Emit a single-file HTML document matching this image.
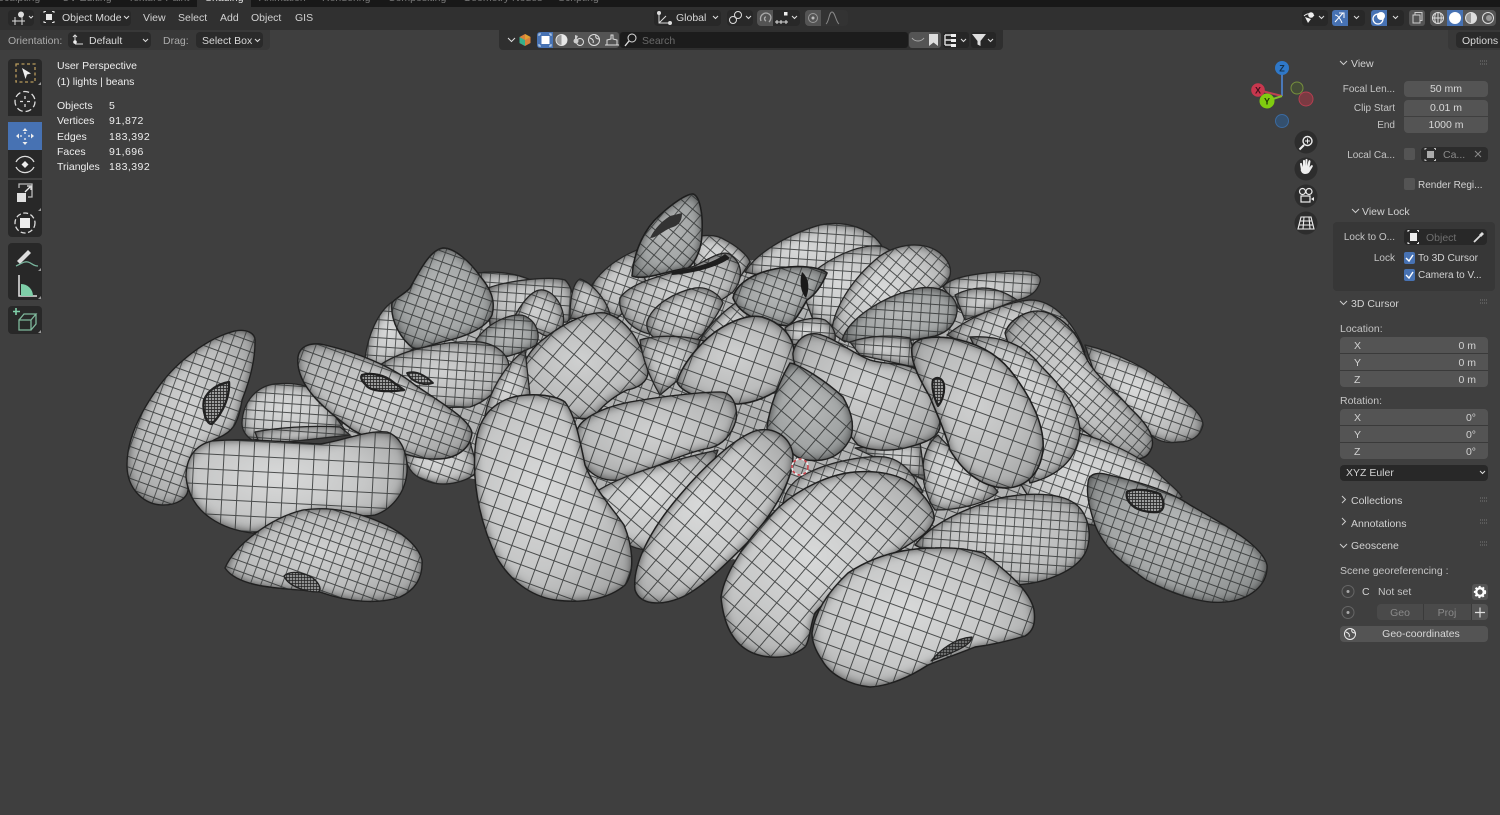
<!DOCTYPE html>
<html><head><meta charset="utf-8"><style>
html,body{margin:0;padding:0;background:#3f3f3f;width:1500px;height:815px;overflow:hidden}
body{position:relative;font-family:"Liberation Sans",sans-serif;font-size:10.5px;color:#d2d2d2}
.t{position:absolute;white-space:nowrap;line-height:14px;margin-top:1px}
.r{text-align:right}
.c{text-align:center}
.n{letter-spacing:.45px}
.box{position:absolute}
.d{color:#8a8a8a}
.f{position:absolute;background:#545454;color:#d8d8d8;line-height:16px;height:16px;box-sizing:border-box}
svg{position:absolute;left:0;top:0;overflow:visible}
path[stroke="#151515"],path[stroke="#1e1e1e"],path[stroke="#111"]{filter:url(#i)}
</style></head><body>

<svg width="1500" height="815" viewBox="0 0 1500 815" fill="none">
<defs>
<filter id="i" x="-25%" y="-25%" width="150%" height="150%" color-interpolation-filters="sRGB">
<feFlood flood-color="#2c2c2c" result="f"/>
<feComposite in="f" in2="SourceAlpha" operator="out" result="o"/>
<feGaussianBlur in="o" stdDeviation="5" result="b"/>
<feComposite in="b" in2="SourceAlpha" operator="in" result="s"/>
<feMerge><feMergeNode in="SourceGraphic"/><feMergeNode in="s"/></feMerge>
</filter>
<radialGradient id="g" cx=".48" cy=".45" r=".65"><stop offset="0" stop-color="#cfd0d0"/><stop offset=".6" stop-color="#bcbdbd"/><stop offset="1" stop-color="#a2a3a3"/></radialGradient>
<radialGradient id="h" cx=".5" cy=".45" r=".65"><stop offset="0" stop-color="#b6b8b8"/><stop offset=".6" stop-color="#a2a5a5"/><stop offset="1" stop-color="#858888"/></radialGradient>
<radialGradient id="k" cx=".42" cy=".45" r=".65"><stop offset="0" stop-color="#d8d9d9"/><stop offset=".6" stop-color="#c6c7c7"/><stop offset="1" stop-color="#a8a9a9"/></radialGradient>
<pattern id="a0" width="9" height="9" patternUnits="userSpaceOnUse" patternTransform="rotate(4)"><path d="M0 4.500H9M4.500 0V9" stroke="#2b2d2d" stroke-opacity=".8" stroke-width=".9"/></pattern>
<pattern id="a20" width="10" height="10" patternUnits="userSpaceOnUse" patternTransform="rotate(20)"><path d="M0 5H10M5 0V10" stroke="#2b2d2d" stroke-opacity=".8" stroke-width=".9"/></pattern>
<pattern id="a40" width="10" height="10" patternUnits="userSpaceOnUse" patternTransform="rotate(40)"><path d="M0 5H10M5 0V10" stroke="#2b2d2d" stroke-opacity=".8" stroke-width=".9"/></pattern>
<pattern id="a65" width="10" height="10" patternUnits="userSpaceOnUse" patternTransform="rotate(65)"><path d="M0 5H10M5 0V10" stroke="#2b2d2d" stroke-opacity=".8" stroke-width=".9"/></pattern>
<pattern id="c0" width="15" height="15" patternUnits="userSpaceOnUse" patternTransform="rotate(3)"><path d="M0 7.500H15M7.500 0V15" stroke="#2b2d2d" stroke-opacity=".8" stroke-width="1"/></pattern>
<pattern id="c20" width="15" height="15" patternUnits="userSpaceOnUse" patternTransform="rotate(20)"><path d="M0 7.500H15M7.500 0V15" stroke="#2b2d2d" stroke-opacity=".8" stroke-width="1"/></pattern>
<pattern id="c40" width="15" height="15" patternUnits="userSpaceOnUse" patternTransform="rotate(40)"><path d="M0 7.500H15M7.500 0V15" stroke="#2b2d2d" stroke-opacity=".8" stroke-width="1"/></pattern>
<pattern id="c65" width="15" height="15" patternUnits="userSpaceOnUse" patternTransform="rotate(65)"><path d="M0 7.500H15M7.500 0V15" stroke="#2b2d2d" stroke-opacity=".8" stroke-width="1"/></pattern>
<pattern id="m" width="3" height="3" patternUnits="userSpaceOnUse"><path d="M0 1.500H3M1.500 0V3" stroke="#222" stroke-width=".7"/></pattern>
</defs>

<g stroke-linejoin="round">
<!-- base blob filling pile gaps -->
<path fill="#b2b3b3" d="M385,345L480,295L590,295L640,265L880,255L950,290L1030,305L1085,355L1150,445L1085,490L1000,545L920,550L800,560L720,560L650,545L600,500L480,480L420,470L340,430Z"/><path fill="url(#a20)" d="M385,345L480,295L590,295L640,265L880,255L950,290L1030,305L1085,355L1150,445L1085,490L1000,545L920,550L800,560L720,560L650,545L600,500L480,480L420,470L340,430Z"/>
<!-- back row -->
<path fill="url(#k)" stroke="#1e1e1e" stroke-width="1.2" d="M365,358C368,335 378,312 392,302L420,345L385,366C375,368 366,365 365,358Z"/><path fill="url(#a0)" d="M365,358C368,335 378,312 392,302L420,345L385,366C375,368 366,365 365,358Z"/>
<path fill="url(#g)" stroke="#1e1e1e" stroke-width="1.2" d="M478,273C500,270 525,275 540,285L480,300Z"/><path fill="url(#a0)" d="M478,273C500,270 525,275 540,285L480,300Z"/>
<path fill="url(#g)" stroke="#1e1e1e" stroke-width="1.2" d="M488,288C510,280 550,276 565,280C576,290 575,315 567,322L490,325Z"/><path fill="url(#a0)" d="M488,288C510,280 550,276 565,280C576,290 575,315 567,322L490,325Z"/>
<path fill="url(#g)" stroke="#1e1e1e" stroke-width="1.2" d="M592,285C605,265 625,255 637,250L648,290L615,320C605,310 595,295 592,285Z"/><path fill="url(#a20)" d="M592,285C605,265 625,255 637,250L648,290L615,320C605,310 595,295 592,285Z"/>
<path fill="url(#g)" stroke="#1e1e1e" stroke-width="1.2" d="M570,318C570,295 574,282 580,279C590,282 606,298 610,314C596,316 580,320 570,318Z"/><path fill="url(#a20)" d="M570,318C570,295 574,282 580,279C590,282 606,298 610,314C596,316 580,320 570,318Z"/>
<path fill="url(#g)" stroke="#1e1e1e" stroke-width="1.2" d="M509,330C515,312 530,288 543,290C556,292 566,310 563,325C558,335 550,340 540,333C530,328 515,330 509,330Z"/><path fill="url(#a20)" d="M509,330C515,312 530,288 543,290C556,292 566,310 563,325C558,335 550,340 540,333C530,328 515,330 509,330Z"/>
<path fill="url(#k)" stroke="#1e1e1e" stroke-width="1.2" d="M692,240C697,235 715,233 725,240C735,245 748,255 750,262L735,285L695,270Z"/><path fill="url(#a40)" d="M692,240C697,235 715,233 725,240C735,245 748,255 750,262L735,285L695,270Z"/>
<path fill="url(#h)" stroke="#111" stroke-width="1.5" d="M632,276C634,250 645,228 660,215C672,204 686,194 693,194C700,196 703,215 702,232C702,248 696,262 688,268C670,270 645,281 632,276Z"/><path fill="url(#a40)" d="M632,276C634,250 645,228 660,215C672,204 686,194 693,194C700,196 703,215 702,232C702,248 696,262 688,268C670,270 645,281 632,276Z"/>
<path fill="#333" d="M650,238C656,226 664,220 670,216L682,213C682,222 678,226 670,228C662,232 656,238 650,238Z"/>
<path fill="url(#k)" stroke="#1e1e1e" stroke-width="1.2" d="M745,272C755,255 785,235 820,225C845,220 872,228 883,248C875,262 820,272 790,282Z"/><path fill="url(#a0)" d="M745,272C755,255 785,235 820,225C845,220 872,228 883,248C875,262 820,272 790,282Z"/>
<path fill="url(#k)" stroke="#1e1e1e" stroke-width="1.2" d="M800,285C820,262 855,244 880,246C900,250 900,270 880,295C860,320 835,330 815,325Z"/><path fill="url(#a0)" d="M800,285C820,262 855,244 880,246C900,250 900,270 880,295C860,320 835,330 815,325Z"/>
<path fill="url(#g)" stroke="#1e1e1e" stroke-width="1.2" d="M620,298C630,282 665,275 695,266C710,258 725,248 732,256C742,264 744,278 733,292C715,305 690,320 660,335C640,336 617,320 620,298Z"/><path fill="url(#a20)" d="M620,298C630,282 665,275 695,266C710,258 725,248 732,256C742,264 744,278 733,292C715,305 690,320 660,335C640,336 617,320 620,298Z"/>
<path fill="#1e1e1e" d="M672,272C695,268 715,262 725,254L730,258C718,267 695,273 672,275Z"/>
<path fill="url(#g)" stroke="#1e1e1e" stroke-width="1.2" d="M647,322C652,305 675,292 695,288C708,286 720,295 723,303C715,320 705,332 697,340L655,338C650,335 646,330 647,322Z"/><path fill="url(#a20)" d="M647,322C652,305 675,292 695,288C708,286 720,295 723,303C715,320 705,332 697,340L655,338C650,335 646,330 647,322Z"/>
<path fill="url(#g)" stroke="#1e1e1e" stroke-width="1.2" d="M700,340C708,325 725,310 740,300L760,330L720,345Z"/><path fill="url(#a40)" d="M700,340C708,325 725,310 740,300L760,330L720,345Z"/>
<path fill="url(#h)" stroke="#111" stroke-width="1.6" d="M733,298C736,283 755,272 780,268C800,265 820,267 827,273C822,285 815,295 807,300C800,312 795,322 787,326C770,323 742,320 733,298Z"/><path fill="url(#a20)" d="M733,298C736,283 755,272 780,268C800,265 820,267 827,273C822,285 815,295 807,300C800,312 795,322 787,326C770,323 742,320 733,298Z"/>
<path fill="#1a1a1a" d="M802,272C809,278 810,288 806,298C801,293 799,282 802,272Z"/>
<path fill="url(#g)" stroke="#1e1e1e" stroke-width="1.2" d="M943,287C950,276 985,272 1015,271C1035,270 1042,276 1040,282C1037,292 1030,297 1018,300L960,310Z"/><path fill="url(#a0)" d="M943,287C950,276 985,272 1015,271C1035,270 1042,276 1040,282C1037,292 1030,297 1018,300L960,310Z"/>
<path fill="url(#g)" stroke="#1e1e1e" stroke-width="1.2" d="M955,295C975,285 995,285 1017,300L965,320Z"/><path fill="url(#a0)" d="M955,295C975,285 995,285 1017,300L965,320Z"/>
<path fill="url(#k)" stroke="#1e1e1e" stroke-width="1.2" d="M832,333C832,312 850,280 880,256C900,242 930,240 945,258C955,270 950,282 940,288C912,300 870,320 845,342Z"/><path fill="url(#a40)" d="M832,333C832,312 850,280 880,256C900,242 930,240 945,258C955,270 950,282 940,288C912,300 870,320 845,342Z"/>
<path fill="url(#h)" stroke="#1e1e1e" stroke-width="1.3" d="M842,340C848,318 885,295 920,288C945,285 958,298 957,312C955,325 948,332 935,336C900,342 870,350 842,340Z"/><path fill="url(#a0)" d="M842,340C848,318 885,295 920,288C945,285 958,298 957,312C955,325 948,332 935,336C900,342 870,350 842,340Z"/>
<path fill="url(#g)" stroke="#1e1e1e" stroke-width="1.2" d="M947,335C965,320 1000,303 1030,300C1055,300 1075,325 1085,352L1000,360Z"/><path fill="url(#a20)" d="M947,335C965,320 1000,303 1030,300C1055,300 1075,325 1085,352L1000,360Z"/>
<path fill="url(#k)" stroke="#1e1e1e" stroke-width="1.2" d="M785,328C795,320 815,316 825,320C832,325 836,332 835,340L790,345Z"/><path fill="url(#a0)" d="M785,328C795,320 815,316 825,320C832,325 836,332 835,340L790,345Z"/>

<!-- pointed big bean -->
<path fill="url(#h)" stroke="#151515" stroke-width="1.4" d="M392,303C395,298 405,294 410,288C420,270 430,250 443,248C455,248 470,262 480,276C490,288 496,300 492,315C485,330 460,338 442,342C430,345 420,350 413,348C402,340 390,322 392,303Z"/><path fill="url(#a20)" d="M392,303C395,298 405,294 410,288C420,270 430,250 443,248C455,248 470,262 480,276C490,288 496,300 492,315C485,330 460,338 442,342C430,345 420,350 413,348C402,340 390,322 392,303Z"/>
<path fill="url(#h)" stroke="#1e1e1e" stroke-width="1.2" d="M476,340C490,320 515,312 525,316C537,322 541,335 536,345C525,352 500,360 490,358C480,355 475,348 476,340Z"/><path fill="url(#a0)" d="M476,340C490,320 515,312 525,316C537,322 541,335 536,345C525,352 500,360 490,358C480,355 475,348 476,340Z"/>

<!-- back mid -->
<path fill="url(#g)" stroke="#1e1e1e" stroke-width="1.2" d="M380,365C405,348 450,340 480,342C500,345 512,358 508,372C500,390 485,402 470,407L420,408Z"/><path fill="url(#a0)" d="M380,365C405,348 450,340 480,342C500,345 512,358 508,372C500,390 485,402 470,407L420,408Z"/>
<path fill="url(#k)" stroke="#1e1e1e" stroke-width="1.2" d="M242,423C243,400 258,386 275,384C295,382 310,385 320,395L345,430L252,440C246,436 242,430 242,423Z"/><path fill="url(#a0)" d="M242,423C243,400 258,386 275,384C295,382 310,385 320,395L345,430L252,440C246,436 242,430 242,423Z"/>
<path fill="url(#k)" stroke="#1e1e1e" stroke-width="1.2" d="M405,455C420,450 440,445 470,442L478,470C470,482 445,487 430,482C415,478 407,470 405,455Z"/><path fill="url(#a20)" d="M405,455C420,450 440,445 470,442L478,470C470,482 445,487 430,482C415,478 407,470 405,455Z"/>
<path fill="url(#g)" stroke="#1e1e1e" stroke-width="1.2" d="M255,432C275,428 310,425 340,427L350,435L260,445Z"/><path fill="url(#a0)" d="M255,432C275,428 310,425 340,427L350,435L260,445Z"/>

<!-- left bean -->
<path fill="url(#g)" stroke="#151515" stroke-width="1.3" d="M255,342C256,332 245,329 235,331C207,338 177,362 160,385C140,412 127,440 127,465C127,490 145,505 163,505C178,505 187,498 188,490C186,465 192,450 218,438C232,432 238,425 242,400C250,380 255,360 255,342Z"/><path fill="url(#a20)" d="M255,342C256,332 245,329 235,331C207,338 177,362 160,385C140,412 127,440 127,465C127,490 145,505 163,505C178,505 187,498 188,490C186,465 192,450 218,438C232,432 238,425 242,400C250,380 255,360 255,342Z"/>
<path fill="#9c9d9d" d="M204,400C208,390 218,384 229,382C230,395 224,412 212,424C206,424 202,410 204,400Z"/><path fill="url(#m)" stroke="#111" stroke-width="2.2" d="M204,400C208,390 218,384 229,382C230,395 224,412 212,424C206,424 202,410 204,400Z"/>

<!-- bean w/ ring -->
<path fill="url(#g)" stroke="#151515" stroke-width="1.4" d="M298,357C300,345 312,342 325,345C355,352 390,365 415,385C445,405 470,420 472,433C470,450 455,459 437,459C410,460 380,445 353,430C325,410 295,385 298,357Z"/><path fill="url(#a20)" d="M298,357C300,345 312,342 325,345C355,352 390,365 415,385C445,405 470,420 472,433C470,450 455,459 437,459C410,460 380,445 353,430C325,410 295,385 298,357Z"/>
<path fill="#9c9d9d" d="M362,375C370,372 385,375 393,382L404,390C390,392 370,392 366,385C362,381 360,378 362,375Z"/><path fill="url(#m)" stroke="#111" stroke-width="2.2" d="M362,375C370,372 385,375 393,382L404,390C390,392 370,392 366,385C362,381 360,378 362,375Z"/>
<path fill="#9c9d9d" d="M407,373C415,370 425,375 433,383C425,386 412,383 407,373Z"/><path fill="url(#m)" stroke="#222" stroke-width="1.8" d="M407,373C415,370 425,375 433,383C425,386 412,383 407,373Z"/>

<!-- long horizontal -->
<path fill="url(#k)" stroke="#151515" stroke-width="1.3" d="M186,477C186,458 195,445 212,441C245,438 285,442 320,444C340,442 365,430 387,432C402,437 408,455 407,472C405,495 390,510 375,515C360,518 340,512 320,510C300,515 280,525 253,533C225,530 190,515 186,477Z"/><path fill="url(#c0)" d="M186,477C186,458 195,445 212,441C245,438 285,442 320,444C340,442 365,430 387,432C402,437 408,455 407,472C405,495 390,510 375,515C360,518 340,512 320,510C300,515 280,525 253,533C225,530 190,515 186,477Z"/>

<!-- front-left -->
<path fill="url(#g)" stroke="#151515" stroke-width="1.3" d="M225,568C235,545 270,518 303,510C330,506 355,512 375,520C400,530 418,545 422,560C423,578 415,590 400,597C380,604 350,603 320,592C290,588 240,590 225,568Z"/><path fill="url(#a20)" d="M225,568C235,545 270,518 303,510C330,506 355,512 375,520C400,530 418,545 422,560C423,578 415,590 400,597C380,604 350,603 320,592C290,588 240,590 225,568Z"/>
<path fill="#8f9090" d="M284,576C290,570 303,572 313,578C320,584 322,590 318,592C305,592 288,586 284,576Z"/><path fill="url(#m)" stroke="#222" stroke-width="1.3" d="M284,576C290,570 303,572 313,578C320,584 322,590 318,592C305,592 288,586 284,576Z"/>

<!-- center left rounded bean behind -->
<path fill="url(#g)" stroke="#151515" stroke-width="1.3" d="M517,392C518,370 528,350 545,338C565,322 590,311 605,313C625,318 642,340 648,372C648,382 638,388 627,390C612,397 600,408 593,418C575,420 550,415 535,405C525,402 518,398 517,392Z"/><path fill="url(#c40)" d="M517,392C518,370 528,350 545,338C565,322 590,311 605,313C625,318 642,340 648,372C648,382 638,388 627,390C612,397 600,408 593,418C575,420 550,415 535,405C525,402 518,398 517,392Z"/>
<path fill="url(#k)" stroke="#1e1e1e" stroke-width="1.2" d="M485,415C490,390 505,365 525,350L530,395L490,425Z"/><path fill="url(#a20)" d="M485,415C490,390 505,365 525,350L530,395L490,425Z"/>
<path fill="url(#g)" stroke="#1e1e1e" stroke-width="1.2" d="M640,340C655,335 680,335 700,340L690,370L660,395C648,375 642,355 640,340Z"/><path fill="url(#a20)" d="M640,340C655,335 680,335 700,340L690,370L660,395C648,375 642,355 640,340Z"/>

<!-- pointy centre -->
<path fill="url(#g)" stroke="#151515" stroke-width="1.5" d="M677,382C682,365 698,345 715,332C732,320 750,314 762,317C780,322 792,335 794,350C796,365 792,378 785,385C772,395 755,403 738,404C715,403 682,395 677,382Z"/><path fill="url(#c20)" d="M677,382C682,365 698,345 715,332C732,320 750,314 762,317C780,322 792,335 794,350C796,365 792,378 785,385C772,395 755,403 738,404C715,403 682,395 677,382Z"/>

<!-- under main -->
<path fill="url(#g)" stroke="#151515" stroke-width="1.3" d="M577,432C578,420 600,408 630,402C670,395 705,392 720,392C732,392 738,405 736,420C732,435 722,445 710,448C685,452 650,470 620,480C590,483 575,460 577,432Z"/><path fill="url(#c20)" d="M577,432C578,420 600,408 630,402C670,395 705,392 720,392C732,392 738,405 736,420C732,435 722,445 710,448C685,452 650,470 620,480C590,483 575,460 577,432Z"/>
<path fill="url(#k)" stroke="#1e1e1e" stroke-width="1.2" d="M596,492C620,475 680,458 718,450L700,500L650,550C625,550 600,530 596,492Z"/><path fill="url(#c40)" d="M596,492C620,475 680,458 718,450L700,500L650,550C625,550 600,530 596,492Z"/>

<!-- main bean -->
<path fill="url(#k)" stroke="#151515" stroke-width="1.4" d="M475,450C477,420 490,405 510,398C530,392 555,395 565,402C575,415 580,440 585,465C595,490 610,505 624,525C632,545 636,570 625,585C610,598 585,604 555,600C530,596 510,580 497,558C483,530 472,490 475,450Z"/><path fill="url(#c20)" d="M475,450C477,420 490,405 510,398C530,392 555,395 565,402C575,415 580,440 585,465C595,490 610,505 624,525C632,545 636,570 625,585C610,598 585,604 555,600C530,596 510,580 497,558C483,530 472,490 475,450Z"/>

<!-- right cluster back -->
<path fill="url(#k)" stroke="#1e1e1e" stroke-width="1.2" d="M1085,345C1115,352 1150,368 1175,392C1190,405 1203,415 1203,425C1200,438 1190,442 1178,442C1165,444 1155,440 1148,432L1095,375Z"/><path fill="url(#a20)" d="M1085,345C1115,352 1150,368 1175,392C1190,405 1203,415 1203,425C1200,438 1190,442 1178,442C1165,444 1155,440 1148,432L1095,375Z"/>
<path fill="url(#g)" stroke="#1e1e1e" stroke-width="1.2" d="M850,342C870,335 895,335 910,338L918,368L860,355Z"/><path fill="url(#a0)" d="M850,342C870,335 895,335 910,338L918,368L860,355Z"/>
<path fill="url(#g)" stroke="#151515" stroke-width="1.3" d="M1005,333C1010,318 1030,308 1045,312C1065,318 1078,335 1083,350C1090,372 1110,385 1130,408C1145,422 1155,435 1152,447C1148,458 1140,462 1128,455C1100,448 1070,420 1050,400C1030,380 1010,355 1005,333Z"/><path fill="url(#a40)" d="M1005,333C1010,318 1030,308 1045,312C1065,318 1078,335 1083,350C1090,372 1110,385 1130,408C1145,422 1155,435 1152,447C1148,458 1140,462 1128,455C1100,448 1070,420 1050,400C1030,380 1010,355 1005,333Z"/>
<path fill="url(#k)" stroke="#1e1e1e" stroke-width="1.2" d="M1020,483C1035,465 1060,440 1078,433C1105,440 1140,455 1160,475C1170,485 1178,490 1182,497L1120,530L1040,515Z"/><path fill="url(#a20)" d="M1020,483C1035,465 1060,440 1078,433C1105,440 1140,455 1160,475C1170,485 1178,490 1182,497L1120,530L1040,515Z"/>
<path fill="url(#k)" stroke="#151515" stroke-width="1.3" d="M970,337C1000,335 1025,345 1040,365C1060,385 1078,405 1080,430C1078,458 1060,475 1030,483L1000,400Z"/><path fill="url(#a20)" d="M970,337C1000,335 1025,345 1040,365C1060,385 1078,405 1080,430C1078,458 1060,475 1030,483L1000,400Z"/>
<path fill="url(#k)" stroke="#1e1e1e" stroke-width="1.2" d="M923,473C922,455 930,440 938,435C960,460 985,475 998,492C985,505 955,510 935,510C928,500 923,485 923,473Z"/><path fill="url(#a20)" d="M923,473C922,455 930,440 938,435C960,460 985,475 998,492C985,505 955,510 935,510C928,500 923,485 923,473Z"/>
<path fill="url(#k)" stroke="#1e1e1e" stroke-width="1.2" d="M855,448L920,442L925,480L870,455Z"/><path fill="url(#a0)" d="M855,448L920,442L925,480L870,455Z"/>

<!-- s-bean -->
<path fill="url(#g)" stroke="#151515" stroke-width="1.3" d="M793,353C796,340 805,332 818,334C835,338 850,352 870,360C885,365 905,362 917,370C930,385 940,405 940,427C938,438 925,443 905,448C885,452 868,450 858,445C845,430 835,415 820,395C805,380 792,368 793,353Z"/><path fill="url(#c20)" d="M793,353C796,340 805,332 818,334C835,338 850,352 870,360C885,365 905,362 917,370C930,385 940,405 940,427C938,438 925,443 905,448C885,452 868,450 858,445C845,430 835,415 820,395C805,380 792,368 793,353Z"/>

<!-- pointy stone -->
<path fill="url(#h)" stroke="#151515" stroke-width="1.4" d="M767,427C770,405 780,380 790,363C800,365 825,380 843,397C850,410 855,422 851,437C845,450 835,458 822,460C805,462 795,458 790,450C778,445 767,438 767,427Z"/><path fill="url(#c40)" d="M767,427C770,405 780,380 790,363C800,365 825,380 843,397C850,410 855,422 851,437C845,450 835,458 822,460C805,462 795,458 790,450C778,445 767,438 767,427Z"/>

<!-- dark front big right -->
<path fill="url(#g)" stroke="#111" stroke-width="1.5" d="M912,347C915,338 930,336 950,338C975,342 995,352 1010,370C1030,395 1045,425 1043,450C1040,475 1025,487 1007,488C985,488 965,475 950,450C945,430 935,410 930,397C920,380 910,362 912,347Z"/><path fill="url(#c20)" d="M912,347C915,338 930,336 950,338C975,342 995,352 1010,370C1030,395 1045,425 1043,450C1040,475 1025,487 1007,488C985,488 965,475 950,450C945,430 935,410 930,397C920,380 910,362 912,347Z"/>
<path fill="#9c9d9d" d="M933,380C937,376 943,378 944,385C945,392 942,402 938,406C934,398 931,386 933,380Z"/><path fill="url(#m)" stroke="#111" stroke-width="2" d="M933,380C937,376 943,378 944,385C945,392 942,402 938,406C934,398 931,386 933,380Z"/>

<!-- diagonal long -->
<path fill="url(#k)" stroke="#151515" stroke-width="1.4" d="M635,590C632,565 650,530 680,495C705,465 735,438 755,431C772,426 790,435 793,455C793,480 775,510 750,540C725,565 700,590 680,598C660,606 640,605 635,590Z"/><path fill="url(#c40)" d="M635,590C632,565 650,530 680,495C705,465 735,438 755,431C772,426 790,435 793,455C793,480 775,510 750,540C725,565 700,590 680,598C660,606 640,605 635,590Z"/>

<!-- cursor bean behind -->
<path fill="url(#g)" stroke="#1e1e1e" stroke-width="1.2" d="M783,503C785,490 795,478 810,472C830,462 865,455 885,457C905,460 915,478 923,492L850,510L795,510Z"/><path fill="url(#a20)" d="M783,503C785,490 795,478 810,472C830,462 865,455 885,457C905,460 915,478 923,492L850,510L795,510Z"/>

<!-- right front -->
<path fill="url(#g)" stroke="#151515" stroke-width="1.3" d="M915,545C930,525 960,510 1000,498C1030,492 1060,493 1074,503C1085,510 1092,528 1088,545C1085,560 1070,572 1045,580C1025,586 1000,587 985,580Z"/><path fill="url(#a0)" d="M915,545C930,525 960,510 1000,498C1030,492 1060,493 1074,503C1085,510 1092,528 1088,545C1085,560 1070,572 1045,580C1025,586 1000,587 985,580Z"/>
<path fill="url(#h)" stroke="#151515" stroke-width="1.3" d="M1088,483C1088,475 1095,472 1105,474C1130,480 1165,488 1190,505C1225,525 1262,545 1267,565C1268,585 1250,600 1225,602C1200,605 1165,590 1146,580C1125,565 1105,550 1095,525C1090,510 1086,495 1088,483Z"/><path fill="url(#a20)" d="M1088,483C1088,475 1095,472 1105,474C1130,480 1165,488 1190,505C1225,525 1262,545 1267,565C1268,585 1250,600 1225,602C1200,605 1165,590 1146,580C1125,565 1105,550 1095,525C1090,510 1086,495 1088,483Z"/>
<path fill="#9c9d9d" d="M1127,492C1135,488 1150,490 1160,494C1165,502 1165,510 1158,512C1148,513 1135,510 1130,503C1127,500 1126,495 1127,492Z"/><path fill="url(#m)" stroke="#111" stroke-width="2.2" d="M1127,492C1135,488 1150,490 1160,494C1165,502 1165,510 1158,512C1148,513 1135,510 1130,503C1127,500 1126,495 1127,492Z"/>

<!-- front big -->
<path fill="url(#k)" stroke="#151515" stroke-width="1.4" d="M721,597C725,570 750,535 779,507C800,488 830,474 855,472C880,470 905,475 918,490C928,500 935,510 934,520C930,532 920,538 900,550C870,565 835,590 815,613C810,625 810,640 805,647C795,655 785,658 770,657C745,655 725,640 721,597Z"/><path fill="url(#c40)" d="M721,597C725,570 750,535 779,507C800,488 830,474 855,472C880,470 905,475 918,490C928,500 935,510 934,520C930,532 920,538 900,550C870,565 835,590 815,613C810,625 810,640 805,647C795,655 785,658 770,657C745,655 725,640 721,597Z"/>

<path fill="url(#k)" stroke="#151515" stroke-width="1.4" d="M812,633C815,610 830,590 848,573C875,555 905,548 935,548C955,547 972,550 983,553C1005,570 1030,590 1034,610C1036,625 1032,632 1025,636C1005,642 990,645 975,647C955,655 940,660 928,665C905,680 885,686 870,687C850,685 830,675 822,660C815,650 812,642 812,633Z"/><path fill="url(#c20)" d="M812,633C815,610 830,590 848,573C875,555 905,548 935,548C955,547 972,550 983,553C1005,570 1030,590 1034,610C1036,625 1032,632 1025,636C1005,642 990,645 975,647C955,655 940,660 928,665C905,680 885,686 870,687C850,685 830,675 822,660C815,650 812,642 812,633Z"/>
<path fill="#6e6f6f" d="M931,661C940,650 955,638 972,637C972,645 955,652 931,661Z"/><path fill="url(#m)" stroke="#222" stroke-width="1.200" d="M931,661C940,650 955,638 972,637C972,645 955,652 931,661Z"/>
</g>

<!-- 3D cursor -->
<circle cx="800" cy="467" r="8" stroke="#eee" stroke-width="1.6"/>
<circle cx="800" cy="467" r="8" stroke="#c5404a" stroke-width="1.6" stroke-dasharray="3 3"/>
</svg>

<!-- top bars -->
<div class="box" style="left:0;top:0;width:1500px;height:7px;background:#181818;overflow:hidden;color:#777">
<div class="box" style="left:197px;top:0;width:54px;height:7px;background:#303030"></div>
<span class="t" style="left:-3px;top:-10px">Sculpting</span><span class="t" style="left:62px;top:-10px">UV Editing</span><span class="t" style="left:128px;top:-10px">Texture Paint</span><span class="t" style="left:205px;top:-10px;color:#ddd">Shading</span><span class="t" style="left:259px;top:-10px">Animation</span><span class="t" style="left:322px;top:-10px">Rendering</span><span class="t" style="left:388px;top:-10px">Compositing</span><span class="t" style="left:463px;top:-10px">Geometry Nodes</span><span class="t" style="left:558px;top:-10px">Scripting</span><span class="t" style="left:615px;top:-10px">+</span>
</div>
<div class="box" style="left:0;top:7px;width:1500px;height:23px;background:#303030"></div>

<!-- row 1 left -->
<div class="box" style="left:8px;top:10px;width:26px;height:16px;background:#282828;border-radius:4px"></div>
<div class="box" style="left:40px;top:10px;width:91px;height:16px;background:#282828;border-radius:4px"></div>
<svg width="140" height="30" fill="none" stroke="#ddd" stroke-width="1">
<path d="M12 21h13M15 17v8M22 17v8"/><circle cx="21" cy="14.500" r="3" fill="#ddd" stroke="none"/>
<path d="M29 16l2 2 2-2"/>
<path d="M44 13v-1.500h2M52 11.500h2V13M54 21v1.500h-2M46 22.500h-2V21"/><rect x="46" y="14" width="6" height="6" fill="#e8e8e8" stroke="none"/>
<path d="M124 16l2.500 2.500 2.500-2.500"/></svg>
<span class="t" style="left:62px;top:10px;color:#d8d8d8">Object Mode</span>
<span class="t" style="left:143px;top:10px">View</span>
<span class="t" style="left:178px;top:10px">Select</span>
<span class="t" style="left:220px;top:10px">Add</span>
<span class="t" style="left:251px;top:10px">Object</span>
<span class="t" style="left:295px;top:10px">GIS</span>

<!-- row 1 middle -->
<div class="box" style="left:654px;top:10px;width:67px;height:16px;background:#282828;border-radius:4px"></div>
<div class="box" style="left:727px;top:10px;width:26px;height:16px;background:#282828;border-radius:4px"></div>
<div class="box" style="left:757px;top:10px;width:43px;height:16px;background:#282828;border-radius:4px"></div>
<div class="box" style="left:757px;top:10px;width:16px;height:16px;background:#545454;border-radius:4px 0 0 4px"></div>
<div class="box" style="left:805px;top:10px;width:43px;height:16px;background:#333;border-radius:4px"></div>
<div class="box" style="left:805px;top:10px;width:16px;height:16px;background:#545454;border-radius:4px 0 0 4px"></div>
<span class="t" style="left:676px;top:10px;color:#d8d8d8">Global</span>
<svg width="860" height="30" fill="none" stroke="#ddd" stroke-width="1">
<path d="M659 12v11h11M659 23l7-7"/><circle cx="659" cy="13" r="1.500" fill="#ddd"/><circle cx="670" cy="23" r="1.500" fill="#ddd"/>
<path d="M713 16l2.500 2.500 2.500-2.500M746 16l2.500 2.500 2.500-2.500M792 16l2.500 2.500 2.500-2.500"/>
<circle cx="733" cy="20" r="3.500"/><circle cx="738" cy="15" r="3.500"/>
<path d="M761 21c-2-5 3-10 8-7 3 2 2 6 0 8M766 17c-2 0-2 3 0 4" stroke="#aaa" stroke-width="1.300"/>
<path d="M777 20v4M781 20v4M786 20v4M775 22h13"/><rect x="784" y="12" width="3.500" height="3.500" fill="#eee" stroke="none"/>
<circle cx="813" cy="18" r="4.500" stroke="#999"/><circle cx="813" cy="18" r="1.500" fill="#bbb" stroke="none"/>
<path d="M826 24c3-2 3-12 6-12s4 10 7 12" stroke="#888"/></svg>

<!-- row 1 right -->
<div class="box" style="left:1302px;top:10px;width:26px;height:16px;background:#282828;border-radius:4px"></div>
<div class="box" style="left:1332px;top:10px;width:33px;height:16px;background:#282828;border-radius:4px"></div>
<div class="box" style="left:1332px;top:10px;width:16px;height:16px;background:#4772b3;border-radius:3px 0 0 3px"></div>
<div class="box" style="left:1371px;top:10px;width:33px;height:16px;background:#282828;border-radius:4px"></div>
<div class="box" style="left:1371px;top:10px;width:16px;height:16px;background:#4772b3;border-radius:3px 0 0 3px"></div>
<div class="box" style="left:1409px;top:10px;width:16px;height:16px;background:#545454;border-radius:3px"></div>
<div class="box" style="left:1430px;top:10px;width:66px;height:16px;background:#545454;border-radius:4px"></div>
<div class="box" style="left:1447px;top:10px;width:16px;height:16px;background:#4772b3"></div>
<svg width="1500" height="30" fill="none" stroke="#ddd" stroke-width="1">
<path d="M1304 16c3-3 8-3 10 0" stroke="#eee"/><circle cx="1311" cy="15" r="2.800" fill="#eee" stroke="none"/><path d="M1305 17l3 6 3-4" fill="#eee" stroke="none"/>
<path d="M1319 16l2.500 2.500 2.500-2.500M1354 16l2.500 2.500 2.500-2.500M1393 16l2.500 2.500 2.500-2.500"/>
<path d="M1335 22l8-9M1339 13h5v5M1335 15c3 0 6 5 7 8" stroke="#fff"/>
<circle cx="1378" cy="19" r="5" stroke="#fff" stroke-width="1.300"/><circle cx="1381" cy="16" r="4" fill="#fff" stroke="none"/>
<rect x="1413" y="15" width="7" height="8" stroke="#ccc"/><path d="M1415 15v-2.500h7v8h-2" stroke="#ccc"/>
<circle cx="1438" cy="18" r="5.500"/><path d="M1432.500 18h11M1435.500 13.500c-1 3-1 6 0 9M1440.500 13.500c1 3 1 6 0 9M1438 12.500v11"/>
<circle cx="1455" cy="18" r="6" fill="#fff" stroke="none"/>
<circle cx="1471" cy="18" r="5.500" fill="#999" stroke="#ddd"/><path d="M1471 12.500a5.500 5.500 0 0 1 0 11z" fill="#ddd" stroke="none"/>
<circle cx="1488" cy="18" r="5.500" stroke="#ddd"/><circle cx="1489" cy="18" r="3" fill="#999" stroke="none"/></svg>

<!-- row 2 left -->
<div class="box" style="left:0;top:30px;width:270px;height:20px;background:#383838;border-radius:0 0 4px 0"></div>
<span class="t" style="left:8px;top:33px;color:#aaa">Orientation:</span>
<div class="box" style="left:68px;top:32px;width:83px;height:16px;background:#2a2a2a;border-radius:4px"></div>
<span class="t" style="left:89px;top:33px;color:#d8d8d8">Default</span>
<span class="t" style="left:163px;top:33px;color:#aaa">Drag:</span>
<div class="box" style="left:196px;top:32px;width:67px;height:16px;background:#2a2a2a;border-radius:4px"></div>
<span class="t" style="left:202px;top:33px;color:#d8d8d8">Select Box</span>
<svg width="270" height="50" fill="none" stroke="#ddd"><path d="M75 35v9M75 44h8M73 37l2-2 2 2" stroke-width="1"/><circle cx="75" cy="42" r="1.800" fill="#eee" stroke="none"/><path d="M143 39l2.500 2.500 2.500-2.500M255 39l2.500 2.500 2.500-2.500"/></svg>

<!-- row 2 center -->
<div class="box" style="left:499px;top:30px;width:504px;height:20px;background:#2f2f2f;border-radius:0 0 4px 4px"></div>
<div class="box" style="left:537px;top:32px;width:16px;height:16px;background:#4772b3;border-radius:3px 0 0 3px"></div>
<div class="box" style="left:553px;top:32px;width:66px;height:16px;background:#545454;border-radius:0 3px 3px 0"></div>
<div class="box" style="left:620px;top:32px;width:288px;height:16px;background:#1c1c1c;border-radius:3px"></div>
<div class="box" style="left:909px;top:32px;width:32px;height:16px;background:#545454;border-radius:3px"></div>
<div class="box" style="left:943px;top:32px;width:26px;height:16px;background:#262626;border-radius:3px"></div>
<div class="box" style="left:971px;top:32px;width:25px;height:16px;background:#262626;border-radius:3px"></div>
<span class="t" style="left:642px;top:33px;color:#6a6a6a">Search</span>
<svg width="1010" height="50" fill="none" stroke="#ddd" stroke-width="1">
<path d="M508 38l3.500 3.500 3.500-3.500"/>
<path d="M525 34l5.500 3v6l-5.500 3-5.500-3v-6z" fill="#d8803c" stroke="none"/><path d="M519.500 37l5.500 3v6l-5.500-3z" fill="#36b08c" stroke="none"/><path d="M525 34v6l5.500-3z" fill="#e0a030" stroke="none"/>
<rect x="541.500" y="36" width="8" height="8" fill="#fff" stroke="none"/><path d="M539 36v-2h2M549 34h2v2M551 44v2h-2M541 46h-2v-2" stroke="#cde"/>
<circle cx="561.500" cy="40" r="5.500" fill="#999" stroke="#ddd"/><path d="M561.500 40V34.500a5.500 5.500 0 0 1 0 11z" fill="#e8e8e8" stroke="none"/>
<circle cx="580" cy="42" r="3.500"/><path d="M577 38l-2 2 0-5 3 1z" fill="#ccc" stroke="none"/><circle cx="576" cy="41" r="2.500" fill="#ccc" stroke="none"/>
<circle cx="594" cy="40" r="5.500"/><path d="M590 38c3 1 4 3 3 5M596 35c-1 3 1 4 3 4"/>
<path d="M607 45v-5l4-1v-4h2v4l4 1v5zM605 45h14" stroke="#ddd"/>
<circle cx="632" cy="38" r="4"/><path d="M629 41l-4 5" stroke-width="1.400"/>
<path d="M912 38c3 4 9 4 12 0" stroke="#aaa"/>
<path d="M929 34h9v12l-4.500-3.500L929 46z" fill="#ddd" stroke="none"/>
<path d="M945 35h8M945 35v10M945 40h6M945 45h6" stroke="#ddd" stroke-width="1.400"/><rect x="951" y="34" width="5" height="3" fill="#eee" stroke="none"/><rect x="951" y="39" width="5" height="3" fill="#eee" stroke="none"/><rect x="951" y="44" width="5" height="3" fill="#eee" stroke="none"/>
<path d="M961 39l2.500 2.500 2.500-2.500M988 39l2.500 2.500 2.500-2.500"/>
<path d="M972 34h14l-5.500 7v5l-3-1.500V41z" fill="#ddd" stroke="none"/></svg>

<!-- options -->
<div class="box" style="left:1448px;top:30px;width:52px;height:20px;background:#383838;border-radius:0 0 0 4px"></div>
<div class="box" style="left:1456px;top:32px;width:44px;height:16px;background:#2a2a2a;border-radius:4px 0 0 4px"></div>
<span class="t" style="left:1462px;top:33px;color:#d8d8d8">Options</span>

<!-- viewport info -->
<span class="t" style="left:57px;top:58px;color:#eee">User Perspective</span>
<span class="t" style="left:57px;top:74px;color:#eee">(1) lights | beans</span>
<span class="t" style="left:57px;top:98px;color:#eee">Objects</span><span class="t n" style="left:109px;top:98px;color:#eee">5</span>
<span class="t" style="left:57px;top:113px;color:#eee">Vertices</span><span class="t n" style="left:109px;top:113px;color:#eee">91,872</span>
<span class="t" style="left:57px;top:129px;color:#eee">Edges</span><span class="t n" style="left:109px;top:129px;color:#eee">183,392</span>
<span class="t" style="left:57px;top:144px;color:#eee">Faces</span><span class="t n" style="left:109px;top:144px;color:#eee">91,696</span>
<span class="t" style="left:57px;top:159px;color:#eee">Triangles</span><span class="t n" style="left:109px;top:159px;color:#eee">183,392</span>

<!-- tool strip -->
<div class="box" style="left:8px;top:59px;width:34px;height:178px;background:#282828;border-radius:4px"></div>
<div class="box" style="left:8px;top:122px;width:34px;height:28px;background:#4772b3"></div>
<div class="box" style="left:8px;top:116px;width:34px;height:6px;background:#3f3f3f"></div>
<div class="box" style="left:8px;top:178px;width:34px;height:2px;background:#3f3f3f"></div>
<div class="box" style="left:8px;top:243px;width:34px;height:57px;background:#282828;border-radius:4px"></div>
<div class="box" style="left:8px;top:306px;width:34px;height:28px;background:#282828;border-radius:4px"></div>
<svg width="50" height="340" fill="none" stroke="#ddd" stroke-width="1.300">
<rect x="16" y="64" width="19" height="18" stroke="#b89a5c" stroke-dasharray="3 2.500"/><path d="M22 68l9 5.500-4 1-1.500 4.500z" fill="#eee" stroke="none"/>
<circle cx="25" cy="101.500" r="10" stroke="#ddd" stroke-dasharray="6 3"/><path d="M25 96v3M25 104v3M20 101.500h3M27 101.500h3"/>
<path d="M25 128l-2.500 3h5zM25 145l-2.500-3h5zM16 136l3-2.500v5zM34 136l-3-2.500v5z" fill="#eee" stroke="none"/><path d="M25 132v2M25 138v2M20 136h2M28 136h2" stroke="#eee"/>
<path d="M16 162a10 10 0 0 1 18 0M34 167a10 10 0 0 1-18 0"/><path d="M25 161l3.500 3.500-3.500 3.500-3.500-3.500z" fill="#eee" stroke="none"/>
<path d="M19 188v-4h13v13h-4" stroke="#bbb"/><rect x="17" y="193" width="9" height="9" fill="#e0e0e0" stroke="none"/><path d="M25 192l5-5M27 186h4v4" stroke="#eee"/>
<circle cx="25" cy="223" r="10" stroke-dasharray="5 2.500"/><rect x="20" y="218" width="10" height="10" fill="#eee" stroke="none"/>
<path d="M17 261l11-11 3 3-11 11z" fill="#ddd" stroke="none"/><path d="M16 266c5-2 8-5 12-4 4 1 5 4 10 4" stroke="#78b49c"/>
<path d="M19 275v21h18" stroke="#ddd" stroke-width="1.600"/><path d="M21 296v-12a12 12 0 0 1 12 12z" fill="#7fcfa9" stroke="none"/>
<path d="M19 320v10h12v-10zM19 320l5-6h12l-5 6M31 330l5-6v-10" stroke="#7fb89c"/><path d="M16 308v7M13 311.500h7" stroke="#7fcfa9" stroke-width="1.600"/>
<path d="M41 82l-3 3h3zM41 208l-3 3h3zM41 296l-3 3h3zM41 330l-3 3h3zM41 268l-3 3h3z" fill="#999" stroke="none"/></svg>

<!-- gizmo -->
<svg width="1500" height="240" fill="none">
<path d="M1282 68V96" stroke="#4a78b8" stroke-width="2"/><path d="M1282 96L1258 90" stroke="#c04050" stroke-width="2"/><path d="M1282 96L1267 101" stroke="#86bc2c" stroke-width="2"/>
<circle cx="1282" cy="68" r="7" fill="#2f78c8"/><text x="1282" y="71.500" font-size="9" font-weight="bold" fill="#14304a" text-anchor="middle" font-family="Liberation Sans">Z</text>
<circle cx="1258" cy="90" r="6.800" fill="#c8374e"/><text x="1258" y="93.500" font-size="9" font-weight="bold" fill="#40101c" text-anchor="middle" font-family="Liberation Sans">X</text>
<circle cx="1267" cy="101" r="7.500" fill="#80cc10"/><text x="1267" y="104.500" font-size="9" font-weight="bold" fill="#223a05" text-anchor="middle" font-family="Liberation Sans">Y</text>
<circle cx="1297" cy="88" r="6" fill="#4a5a30" fill-opacity=".5" stroke="#76903c"/><circle cx="1306" cy="99" r="7" fill="#7a3a42" stroke="#b53f50"/><circle cx="1282" cy="121" r="6.500" fill="#34506e" stroke="#3b6aa0"/>
<circle cx="1306" cy="142" r="11.500" fill="#2d2d2d"/><circle cx="1306" cy="169" r="11.500" fill="#2d2d2d"/><circle cx="1306" cy="196" r="11.500" fill="#2d2d2d"/><circle cx="1306" cy="223" r="11.500" fill="#2d2d2d"/>
<circle cx="1307.500" cy="141" r="4.500" stroke="#eee" stroke-width="1.400"/><path d="M1304 145l-4.500 4.500" stroke="#eee" stroke-width="2"/><path d="M1305 141h5M1307.500 138.500v5" stroke="#eee"/>
<path d="M1301 170l-1-6c0-1.500 2-1.500 2 0l1 3v-6c0-1.500 2-1.500 2 0v5l.5-6c0-1.500 2-1.500 2 0l-.5 6 1.500-5c.5-1.500 2-1 2 .5l-1 6 1.500-2c1-1 2.500 0 1.500 1.500l-3 5c-1 1.500-3 2-4.500 2-2.500 0-4-2-4.500-4.500z" fill="#eee"/>
<circle cx="1302.500" cy="191.500" r="3" stroke="#eee" stroke-width="1.200"/><circle cx="1309" cy="191.500" r="3" stroke="#eee" stroke-width="1.200"/><rect x="1301" y="196" width="9" height="6" stroke="#eee" stroke-width="1.200"/><path d="M1311 199l3-2v4z" fill="#eee"/>
<path d="M1301 217h10l3 12h-16zM1304 217l-1 12M1309 217l1 12M1299.500 221h13M1298.500 225h15" stroke="#eee" stroke-width="1.100"/>
</svg>

<!-- N panel -->
<span class="t" style="left:1351px;top:56px">View</span>
<span class="t r" style="right:105px;top:82px;color:#c4c4c4;font-size:10px">Focal Len...</span>
<div class="f c" style="left:1404px;top:81px;width:84px;border-radius:4px">50 mm</div>
<span class="t r" style="right:105px;top:101px;color:#c4c4c4;font-size:10px">Clip Start</span>
<div class="f c" style="left:1404px;top:100px;width:84px;border-radius:4px 4px 0 0">0.01 m</div>
<span class="t r" style="right:105px;top:118px;color:#c4c4c4;font-size:10px">End</span>
<div class="f c" style="left:1404px;top:117px;width:84px;border-radius:0 0 4px 4px">1000 m</div>
<span class="t r" style="right:105px;top:148px;color:#c4c4c4;font-size:10px">Local Ca...</span>
<div class="box" style="left:1404px;top:148px;width:11px;height:12px;background:#545454;border-radius:2px"></div>
<div class="box" style="left:1421px;top:147px;width:67px;height:15px;background:#2c2c2c;border-radius:4px"></div>
<span class="t d" style="left:1443px;top:147px">Ca...</span>
<div class="box" style="left:1404px;top:178px;width:11px;height:12px;background:#545454;border-radius:2px"></div>
<span class="t" style="left:1418px;top:178px;font-size:10px">Render Regi...</span>
<span class="t" style="left:1362px;top:204px">View Lock</span>

<div class="box" style="left:1333px;top:222px;width:162px;height:69px;background:#373737;border-radius:4px"></div>
<span class="t r" style="right:105px;top:230px;color:#c4c4c4;font-size:10px">Lock to O...</span>
<div class="box" style="left:1404px;top:229px;width:83px;height:16px;background:#282828;border-radius:4px"></div>
<span class="t" style="left:1426px;top:230px;color:#6f6f6f">Object</span>
<span class="t r" style="right:105px;top:251px;color:#c4c4c4;font-size:10px">Lock</span>
<div class="box" style="left:1404px;top:252px;width:11px;height:12px;background:#4772b3;border-radius:2px"></div>
<span class="t" style="left:1418px;top:251px;font-size:10.200px">To 3D Cursor</span>
<div class="box" style="left:1404px;top:269px;width:11px;height:12px;background:#4772b3;border-radius:2px"></div>
<span class="t" style="left:1418px;top:268px;font-size:10px">Camera to V...</span>

<span class="t" style="left:1351px;top:296px">3D Cursor</span>
<span class="t" style="left:1340px;top:321px;color:#c4c4c4">Location:</span>
<div class="box" style="left:1340px;top:337px;width:148px;height:50px;background:#545454;border-radius:4px"></div>
<div class="box" style="left:1340px;top:353px;width:148px;height:1px;background:#3a3a3a"></div>
<div class="box" style="left:1340px;top:370px;width:148px;height:1px;background:#3a3a3a"></div>
<span class="t" style="left:1354px;top:338px">X</span><span class="t r" style="right:24px;top:338px">0 m</span>
<span class="t" style="left:1354px;top:355px">Y</span><span class="t r" style="right:24px;top:355px">0 m</span>
<span class="t" style="left:1354px;top:372px">Z</span><span class="t r" style="right:24px;top:372px">0 m</span>
<span class="t" style="left:1340px;top:393px;color:#c4c4c4">Rotation:</span>
<div class="box" style="left:1340px;top:409px;width:148px;height:50px;background:#545454;border-radius:4px"></div>
<div class="box" style="left:1340px;top:425px;width:148px;height:1px;background:#3a3a3a"></div>
<div class="box" style="left:1340px;top:442px;width:148px;height:1px;background:#3a3a3a"></div>
<span class="t" style="left:1354px;top:410px">X</span><span class="t r" style="right:24px;top:410px">0°</span>
<span class="t" style="left:1354px;top:427px">Y</span><span class="t r" style="right:24px;top:427px">0°</span>
<span class="t" style="left:1354px;top:444px">Z</span><span class="t r" style="right:24px;top:444px">0°</span>
<div class="box" style="left:1340px;top:465px;width:148px;height:16px;background:#282828;border-radius:4px"></div>
<span class="t" style="left:1346px;top:465px">XYZ Euler</span>
<span class="t" style="left:1351px;top:493px">Collections</span>
<span class="t" style="left:1351px;top:516px">Annotations</span>
<span class="t" style="left:1351px;top:538px">Geoscene</span>
<span class="t" style="left:1340px;top:563px;color:#c4c4c4">Scene georeferencing :</span>
<span class="t" style="left:1362px;top:584px">C</span>
<span class="t" style="left:1378px;top:584px;color:#c4c4c4">Not set</span>
<div class="box" style="left:1472px;top:584px;width:16px;height:16px;background:#545454;border-radius:3px"></div>
<div class="box" style="left:1377px;top:604px;width:111px;height:16px;background:#4a4a4a;border-radius:4px"></div>
<div class="box" style="left:1472px;top:604px;width:16px;height:16px;background:#545454;border-radius:0 4px 4px 0"></div>
<span class="t c d" style="left:1377px;width:46px;top:605px">Geo</span>
<span class="t c d" style="left:1424px;width:46px;top:605px">Proj</span>
<div class="f c" style="left:1340px;top:626px;width:148px;border-radius:4px;padding-left:14px">Geo-coordinates</div>

<svg width="1500" height="660" fill="none" stroke="#ccc" stroke-width="1">
<path d="M1340 61l3.500 3.500 3.500-3.500M1352 209l3.500 3.500 3.500-3.500M1340 301l3.500 3.500 3.500-3.500M1340 544l3.500 3.500 3.500-3.500"/>
<path d="M1342 496l3.500 3.500-3.500 3.500M1342 518l3.500 3.500-3.500 3.500"/>
<path d="M1480 471l2.500 2.500 2.500-2.500" stroke="#ddd"/>
<path d="M1480 61h8M1480 64h8M1480 303h8M1480 300h8M1480 498h8M1480 501h8M1480 520h8M1480 523h8M1480 542h8M1480 545h8" stroke="#777" stroke-dasharray="1 1"/>
<path d="M1425 150v-1.500h1.500M1434 148.500h1.500v1.500M1435.500 159v1.500H1434M1426.500 160.500H1425V159" stroke="#bbb"/><rect x="1427" y="151" width="7" height="7" fill="#aaa" stroke="none"/>
<path d="M1475 151l6 6M1481 151l-6 6" stroke="#888"/>
<path d="M1408 232v-1.500h1.500M1417 230.500h1.500v1.500M1418.500 242v1.500H1417M1409.500 243.500H1408V242" stroke="#ddd"/><rect x="1410" y="233" width="7" height="8" fill="#eee" stroke="none"/>
<path d="M1474 242l6-6" stroke="#ddd" stroke-width="1.800"/><path d="M1479 235l3-3 2 2-3 3z" fill="#ddd" stroke="none"/>
<path d="M1406 258l3 3 4-6M1406 275l3 3 4-6" stroke="#fff" stroke-width="1.400"/>
<circle cx="1348" cy="591.500" r="6" stroke="#666"/><circle cx="1348" cy="591.500" r="1.500" fill="#aaa" stroke="none"/>
<circle cx="1348" cy="612.500" r="6" stroke="#666"/><circle cx="1348" cy="612.500" r="1.500" fill="#aaa" stroke="none"/>
<circle cx="1480" cy="592" r="3.800" stroke="#fff" stroke-width="2.400"/><circle cx="1480" cy="592" r="5.400" stroke="#fff" stroke-width="1.500" stroke-dasharray="2 2"/>
<path d="M1480 607.500v10M1475 612.500h10" stroke="#ddd" stroke-width="1.200"/>
<circle cx="1350" cy="634" r="5.500" stroke="#eee"/><path d="M1346 632c3 1 4 3 3 5M1352 629c-1 3 1 4 3 4" stroke="#eee"/>
</svg>

<div class="box" style="left:1423px;top:604px;width:1px;height:16px;background:#3a3a3a"></div>
<div class="box" style="left:1471px;top:604px;width:1px;height:16px;background:#3a3a3a"></div>
</body></html>
